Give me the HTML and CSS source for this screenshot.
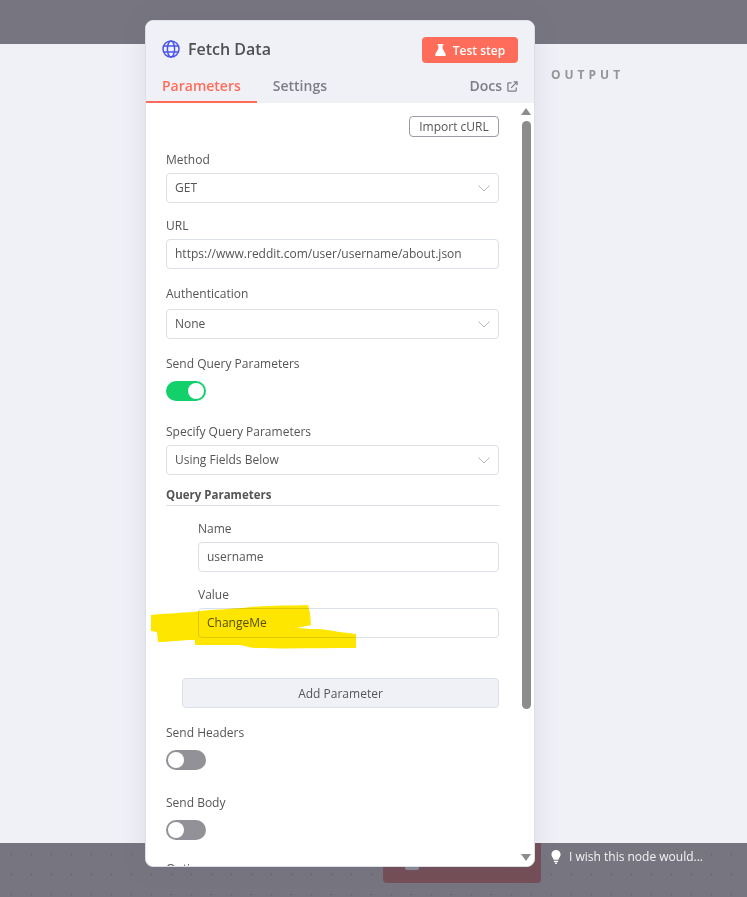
FILE: index.html
```html
<!DOCTYPE html>
<html lang="en">
<head>
<meta charset="utf-8">
<title>Fetch Data</title>
<link rel="stylesheet" href="styles.css">
</head>
<body>
<div class="stage">
  <div class="canvas-top"></div>
  <main class="backdrop">
    <div class="output-title">OUTPUT</div>
  </main>
  <div class="canvas-bottom">
    <div class="node"><span class="node-icon"></span></div>
    <div class="wish">
      <svg class="bulb" viewBox="0 0 10 14" width="10" height="14"><path d="M5 0a4.600 4.600 0 0 0-4.600 4.600c0 2.200 1.800 3.200 2.200 5.200h4.800c.4-2 2.200-3 2.200-5.200A4.600 4.600 0 0 0 5 0zM2.900 10.800h4.200v1.100H2.900zM3.600 12.600h2.800L5.600 14H4.400z" fill="#fff"/></svg>
      <span>I wish this node would...</span>
    </div>
  </div>

  <section class="panel">
    <header class="panel-head">
      <div class="title-row">
        <div class="title">
          <svg class="globe" viewBox="0 0 18 18" width="18" height="18" fill="none" stroke="#4a55e8" stroke-width="1.500"><circle cx="9" cy="9" r="8"/><ellipse cx="9" cy="9" rx="3.600" ry="8"/><path d="M1.600 6h14.800M1.600 12h14.800"/></svg>
          <span>Fetch Data</span>
        </div>
        <button class="test-btn">
          <svg viewBox="0 0 12 13" width="11" height="12"><path d="M2.800 0h6.400v1.200H8.300v3.600l3.400 6.200c.5 1-.1 2-1.200 2h-9C.4 13-.2 12 .3 11l3.400-6.200V1.200h-.9z" fill="#fff"/></svg>
          <span>Test step</span>
        </button>
      </div>
      <nav class="tabs">
        <a class="tab tab-active">Parameters</a>
        <a class="tab">Settings</a>
        <a class="docs">Docs
          <svg viewBox="0 0 12 12" width="11" height="11" fill="none" stroke="#7d7d87" stroke-width="1.400"><path d="M5 2H1.700a.7.700 0 0 0-.7.700v7.600a.7.700 0 0 0 .7.700h7.600a.7.700 0 0 0 .7-.7V7"/><path d="M4.500 7.500 11 1M7.200 .9H11v3.800"/></svg>
        </a>
      </nav>
    </header>

    <div class="body">
      <div class="import-row"><button class="import-btn">Import cURL</button></div>

      <div class="field f-method">
        <label class="label">Method</label>
        <div class="control select">GET<svg class="chev" viewBox="0 0 12 7" width="12" height="7"><path d="M.5.5 6 6l5.500-5.500" fill="none" stroke="#b5b7c2"/></svg></div>
      </div>
      <div class="field f-url">
        <label class="label">URL</label>
        <div class="control">https://www.reddit.com/user/username/about.json</div>
      </div>
      <div class="field f-auth">
        <label class="label label-wide">Authentication</label>
        <div class="control select">None<svg class="chev" viewBox="0 0 12 7" width="12" height="7"><path d="M.5.5 6 6l5.500-5.500" fill="none" stroke="#b5b7c2"/></svg></div>
      </div>
      <div class="field f-send">
        <label class="label label-toggle">Send Query Parameters</label>
        <div class="toggle toggle-on"><span class="knob"></span></div>
      </div>
      <div class="field f-spec">
        <label class="label">Specify Query Parameters</label>
        <div class="control select">Using Fields Below<svg class="chev" viewBox="0 0 12 7" width="12" height="7"><path d="M.5.5 6 6l5.500-5.500" fill="none" stroke="#b5b7c2"/></svg></div>
      </div>
      <div class="section-title">Query Parameters</div>
      <div class="params">
        <div class="field f-name">
          <label class="label">Name</label>
          <div class="control">username</div>
        </div>
        <div class="field f-value">
          <label class="label">Value</label>
          <div class="control">ChangeMe</div>
        </div>
      </div>
      <button class="add-btn">Add Parameter</button>
      <div class="field f-headers">
        <label class="label label-toggle">Send Headers</label>
        <div class="toggle"><span class="knob"></span></div>
      </div>
      <div class="field f-body">
        <label class="label label-toggle">Send Body</label>
        <div class="toggle"><span class="knob"></span></div>
      </div>
      <div class="field f-options">
        <label class="label">Options</label>
      </div>
    </div>

    <div class="scrollbar">
      <span class="arrow-up"></span>
      <span class="thumb"></span>
      <span class="arrow-down"></span>
    </div>

    <svg class="highlight" viewBox="0 0 210 50" width="210" height="50"><path d="M1 15C20 13 36 13 50 11 72 9 85 9 100 7 122 5 140 6 158 5L160 13 161 25 147 28C158 29 165 29 170 29 185 31 195 33 206 34V48C170 48 135 49 107 48 98 48 95 45 88 45H45V40C30 40 20 42 8 42L7 32 1 31Z" fill="#ffe600"/></svg>
  </section>
</div>
</body>
</html>
```
FILE: styles.css
```css
* { box-sizing: border-box; }
html, body { margin: 0; padding: 0; }
body {
  width: 747px;
  height: 897px;
  overflow: hidden;
  font-family: "Open Sans", "Liberation Sans", sans-serif;
  color: #555;
}
.stage {
  position: relative;
  display: flex;
  flex-direction: column;
  width: 747px;
  height: 897px;
  overflow: hidden;
}
.canvas-top { height: 44px; background: #77757f; }
.backdrop {
  height: 799px;
  background: #f0f1f7;
  padding: 23px 0 0 551px;
}
.output-title {
  font-size: 12px;
  line-height: 16px;
  font-weight: 700;
  letter-spacing: 4px;
  color: #939599;
}
.canvas-bottom {
  position: relative;
  height: 54px;
  background-color: #77757f;
  background-image: radial-gradient(circle at 11.500px 11.500px, #62606a 0.700px, transparent 1.100px);
  background-size: 20px 20px;
}
.node {
  position: absolute;
  left: 383px;
  top: 0;
  width: 158px;
  height: 40px;
  background: #754f58;
  border-radius: 0 0 4px 4px;
}
.node-icon {
  position: absolute;
  left: 22px;
  top: 17px;
  width: 14px;
  height: 10px;
  background: #8d8d97;
  border-radius: 2px;
}
.wish {
  position: absolute;
  left: 551px;
  top: 6px;
  display: flex;
  align-items: center;
  gap: 8px;
  font-size: 12px;
  line-height: 16px;
  color: #f4f4f6;
}
.bulb { display: block; }

.panel {
  position: absolute;
  left: 145px;
  top: 20px;
  width: 390px;
  height: 847px;
  background: #fff;
  border: 1px solid #dbdfe7;
  border-radius: 8px;
  overflow: hidden;
  box-shadow: 0 0 24px rgba(90, 95, 130, 0.14);
}
.panel-head {
  height: 82px;
  background: #f0f1f7;
  padding: 16px 16px 0 0;
}
.title-row {
  display: flex;
  justify-content: space-between;
  align-items: center;
  height: 26px;
}
.title {
  display: flex;
  align-items: center;
  gap: 8px;
  padding: 0 0 2px 16px;
  font-size: 16px;
  font-weight: 600;
  color: #4f4f54;
}
.globe { display: block; }
.test-btn {
  display: flex;
  align-items: center;
  justify-content: center;
  gap: 7px;
  width: 96px;
  height: 26px;
  padding: 0;
  border: 0;
  border-radius: 4px;
  background: #ff6d5a;
  color: #fff;
  font: 600 12px "Open Sans", sans-serif;
}
.tabs {
  display: flex;
  align-items: center;
  height: 38px;
  margin-top: 2px;
  font-size: 14px;
  font-weight: 600;
  line-height: 20px;
  color: #7d7d87;
}
.tab {
  display: block;
  height: 38px;
  padding: 11px 16px 0;
}
.tab-active {
  color: #ff6d5a;
  border-bottom: 2px solid #ff6d5a;
}
.docs {
  display: flex;
  align-items: center;
  gap: 5px;
  margin-left: auto;
  padding-top: 4px;
}
.body {
  padding: 13px 35px 0 20px;
  font-size: 12px;
}
.import-row { display: flex; justify-content: flex-end; height: 21px; }
.import-btn {
  width: 90px;
  height: 21px;
  padding: 0;
  background: #fff;
  border: 1px solid #9a9ca6;
  border-radius: 4px;
  color: #555;
  font: 400 12px "Open Sans", sans-serif;
}
.label {
  display: block;
  height: 18px;
  margin-bottom: 5px;
  line-height: 20px;
  font-size: 12px;
  color: #555;
}
.label-wide { margin-bottom: 7px; }
.label-toggle { margin-bottom: 9px; }
.control {
  position: relative;
  height: 30px;
  padding: 0 8px;
  line-height: 28px;
  background: #fff;
  border: 1px solid #dbdfe7;
  border-radius: 4px;
  font-size: 12px;
  color: #555;
}
.chev { position: absolute; right: 8px; top: 11px; display: block; }
.f-method { margin-top: 13px; }
.f-url { margin-top: 13px; }
.f-auth { margin-top: 15px; }
.f-send { margin-top: 15px; }
.f-spec { margin-top: 21px; }
.section-title {
  height: 31px;
  padding-top: 12px;
  border-bottom: 1px solid #dbdfe7;
  font-weight: 700;
  font-size: 11.500px;
  line-height: 16px;
  color: #555;
}
.params { padding-left: 32px; }
.f-name { margin-top: 13px; }
.f-value { margin-top: 13px; }
.add-btn {
  display: block;
  width: 317px;
  height: 30px;
  margin: 40px 0 0 16px;
  padding: 0;
  background: #f0f1f7;
  border: 1px solid #dbdfe7;
  border-radius: 4px;
  color: #555;
  font: 400 12px "Open Sans", sans-serif;
}
.f-headers { margin-top: 15px; }
.f-body { margin-top: 23px; }
.f-options { margin-top: 19px; }
.toggle {
  width: 40px;
  height: 20px;
  padding: 2px;
  border-radius: 10px;
  background: #919197;
}
.toggle-on { background: #13d06b; padding-left: 22px; }
.knob {
  display: block;
  width: 16px;
  height: 16px;
  border-radius: 50%;
  background: #fff;
}
.scrollbar {
  position: absolute;
  right: 3px;
  top: 83px;
  bottom: 0;
  width: 10px;
  display: flex;
  flex-direction: column;
  align-items: center;
}
.arrow-up, .arrow-down {
  width: 0;
  height: 0;
  border-left: 5px solid transparent;
  border-right: 5px solid transparent;
}
.arrow-up { margin-top: 4px; border-bottom: 7px solid #8c8c8c; }
.thumb {
  width: 9px;
  height: 588px;
  margin-top: 6px;
  background: #8c8c8c;
  border-radius: 5px;
}
.arrow-down { margin-top: 145px; border-top: 7px solid #8c8c8c; }
.highlight {
  position: absolute;
  left: 4px;
  top: 579px;
  display: block;
  mix-blend-mode: multiply;
}
```
